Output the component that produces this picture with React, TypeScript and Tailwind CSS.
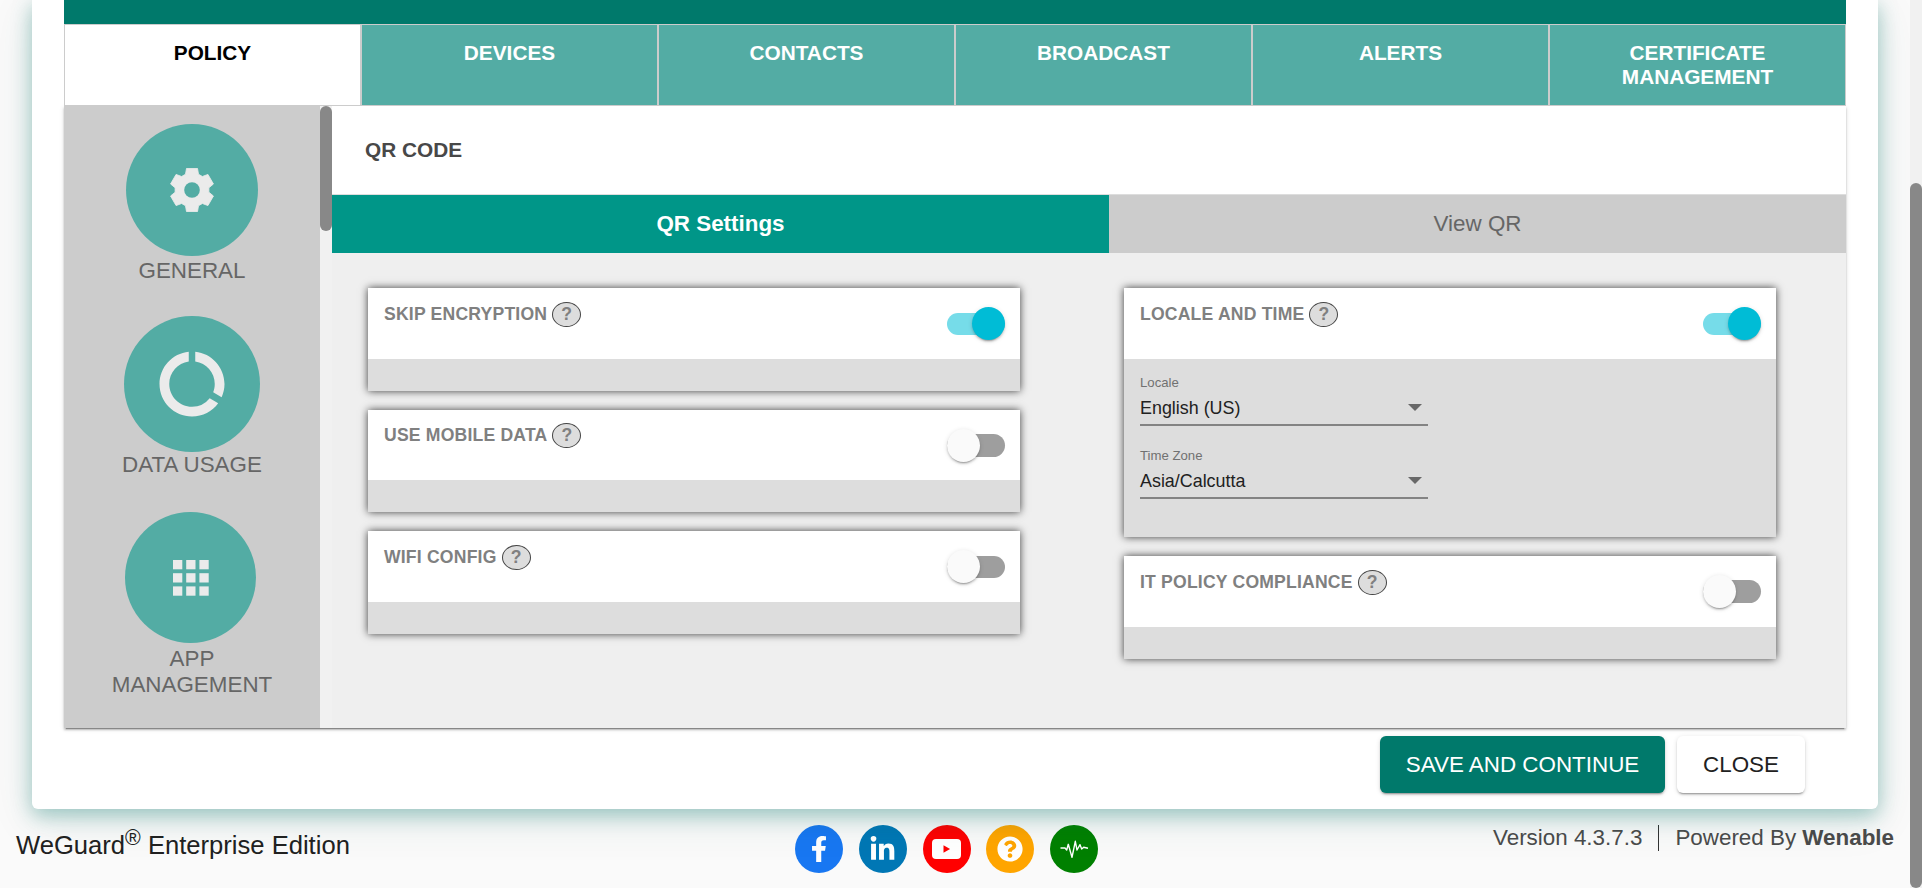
import React from "react";
import { MdDataUsage } from "react-icons/md";
import { FaFacebookF, FaLinkedinIn, FaQuestionCircle } from "react-icons/fa";

const tabs = ["POLICY", "DEVICES", "CONTACTS", "BROADCAST", "ALERTS", "CERTIFICATE MANAGEMENT"];

function Toggle({ on }: { on: boolean }) {
  return (
    <span className={`mt-[24.5px] flex h-[22.5px] w-[58px] items-center rounded-full ${on ? "justify-end bg-[#76dce9]" : "justify-start bg-[#9e9e9e]"}`}>
      <span className={`size-[33px] shrink-0 rounded-full shadow-[0_3px_1px_-2px_rgba(0,0,0,.2),0_2px_2px_0_rgba(0,0,0,.14),0_1px_5px_0_rgba(0,0,0,.12)] ${on ? "bg-[#00bcd6]" : "bg-[#fafafa]"}`} />
    </span>
  );
}

function Card({ title, on = false, children }: { title: string; on?: boolean; children?: React.ReactNode }) {
  return (
    <section className="w-[652px] shadow-[0_0_8px_0_rgba(0,0,0,.75)]">
      <div className="flex h-[70.6px] items-start justify-between bg-white pr-[15.5px] pl-4">
        <h3 className="flex items-start pt-[13.9px] text-[17.6px] leading-[25px] font-bold tracking-[0.19px] text-[#808080]">
          {title}
          <span className="ml-[5px] flex h-[25px] w-[29px] items-center justify-center rounded-[50%] border border-[#444] bg-[#ddd] tracking-normal">?</span>
        </h3>
        <Toggle on={on} />
      </div>
      <div className="min-h-8 bg-[#ddd]">{children}</div>
    </section>
  );
}

function Select({ label, value }: { label: string; value: string }) {
  return (
    <div className="h-[73px] w-[288px]">
      <div className="text-[13.2px] leading-[15px] text-[#717171]">{label}</div>
      <div className="mt-[8px] flex h-[28px] items-start justify-between border-b-2 border-[#838383] text-[17.9px] leading-5 text-[#212121]">
        <span>{value}</span>
        <svg className="mt-[6px] mr-[6px]" width="14" height="7" viewBox="0 0 14 7"><path d="M0 0h14L7 7z" fill="#686868" /></svg>
      </div>
    </div>
  );
}

const gearPoints = [0, 60, 120, 180, 240, 300]
  .flatMap((deg) => {
    const a = (deg * Math.PI) / 180;
    return [[-2.95, -7.15], [-2.5, -9.8], [2.5, -9.8], [2.95, -7.15]].map(
      ([x, y]) => `${(x * Math.cos(a) - y * Math.sin(a)).toFixed(2)},${(x * Math.sin(a) + y * Math.cos(a)).toFixed(2)}`
    );
  })
  .join(" ");

function Gear() {
  return (
    <svg width="44" height="44" viewBox="-10 -10 20 20">
      <polygon points={gearPoints} fill="#ebebeb" stroke="#ebebeb" strokeWidth="0.4" strokeLinejoin="round" />
      <circle r="3.55" fill="#53aca4" />
    </svg>
  );
}

function AppsGrid() {
  return (
    <svg width="36" height="36" viewBox="0 0 36 36" fill="#ebebeb">
      {[0, 13.2, 26.4].map((y) => [0, 13.2, 26.4].map((x) => <rect key={`${x}-${y}`} x={x} y={y} width="9.3" height="9.3" />))}
    </svg>
  );
}

function Play() {
  return (
    <svg width="29" height="20" viewBox="0 0 29 20">
      <rect width="29" height="20" rx="4" fill="#fff" />
      <path d="M11.5 6.2v7.6l6.6-3.8z" fill="#f00" />
    </svg>
  );
}

function Pulse() {
  return (
    <svg width="30" height="24" viewBox="0 0 30 24" fill="none" stroke="#fff" strokeWidth="1.4" strokeLinejoin="round">
      <path d="M1.5 11H6l1.7 2 1.6-5.7L13 20.3l3.3-16L18 13l3-5.3 1.7 4.3 2-1.7 4.3.9" />
    </svg>
  );
}

const social = [
  { bg: "bg-[#1877f2]", icon: <FaFacebookF size={26} /> },
  { bg: "bg-[#0077b5]", icon: <FaLinkedinIn size={27} /> },
  { bg: "bg-[#ff0000]", icon: <Play /> },
  { bg: "bg-[#ffa500]", icon: <FaQuestionCircle size={26} /> },
  { bg: "bg-[#008000]", icon: <Pulse /> },
];

export default function App() {
  return (
    <div className="flex h-[888px] w-full overflow-hidden bg-[#fafafa] font-['Liberation_Sans',Arial,sans-serif]">
      <div className="flex h-full min-w-0 flex-1 flex-col overflow-hidden">
        <main className="z-10 mx-8 h-[809px] shrink-0 rounded-b-[6px] bg-white px-8 shadow-[0_10px_44px_0_rgba(0,90,80,.12),0_6px_20px_0_rgba(0,121,107,.34)]">
          <div className="h-6 bg-[#00796b]" />
          <nav className="grid h-[82px] grid-cols-6">
            {tabs.map((t, i) => (
              <div key={t} className={`flex justify-center border border-[#ccc] px-12 pt-4 text-center text-[20.8px] leading-6 font-bold ${i === 0 ? "bg-white text-black" : "bg-[#53aca4] text-white"}`}>
                {t}
              </div>
            ))}
          </nav>
          <div className="flex h-[622px] shadow-[0_3px_1px_-2px_rgba(0,0,0,.3),0_2px_2px_0_rgba(0,0,0,.2),0_1px_5px_0_rgba(0,0,0,.12)]">
            <aside className="flex w-[256px] flex-col items-center bg-[#ccc] text-center text-[22.4px] leading-[26px] text-[#666]">
              <div className="mt-[18px] flex size-[132px] items-center justify-center rounded-full bg-[#53aca4]">
                <Gear />
              </div>
              <div className="mt-[2px]">GENERAL</div>
              <div className="mt-[32px] flex size-[136px] items-center justify-center rounded-full bg-[#53aca4]">
                <MdDataUsage size={78} color="#ebebeb" />
              </div>
              <div>DATA USAGE</div>
              <div className="mt-[34px] mr-[3px] flex size-[131px] items-center justify-center rounded-full bg-[#53aca4]">
                <AppsGrid />
              </div>
              <div className="mt-[3px] w-[180px]">APP MANAGEMENT</div>
            </aside>
            <div className="w-3 bg-[#f1f1f1]"><div className="h-[125px] rounded-full bg-[#888]" /></div>
            <div className="flex flex-1 flex-col bg-[#efefef]">
              <h2 className="flex h-[89px] items-center border-b border-[#ddd] bg-white pl-[33px] text-[20.8px] font-bold text-[#484848]">QR CODE</h2>
              <div className="flex h-[58px] items-center text-center text-[22.4px] leading-[58px]">
                <div className="w-[777px] bg-[#009688] font-bold text-white">QR Settings</div>
                <div className="flex-1 bg-[#ccc] text-[#666]">View QR</div>
              </div>
              <div className="flex gap-[104px] pt-[35px] pl-9">
                <div className="flex flex-col gap-[19px]">
                  <Card title="SKIP ENCRYPTION" on />
                  <Card title="USE MOBILE DATA" />
                  <Card title="WIFI CONFIG" />
                </div>
                <div className="flex flex-col gap-[19px]">
                  <Card title="LOCALE AND TIME" on>
                    <div className="h-[178.4px] px-4 pt-4">
                      <Select label="Locale" value="English (US)" />
                      <Select label="Time Zone" value="Asia/Calcutta" />
                    </div>
                  </Card>
                  <Card title="IT POLICY COMPLIANCE" />
                </div>
              </div>
            </div>
          </div>
          <div className="mt-2 mr-[41px] flex justify-end gap-3 text-[22.4px]">
            <button className="h-[57px] w-[285px] rounded-[6px] bg-[#00796b] text-white shadow-[0_3px_1px_-2px_rgba(0,0,0,.2),0_2px_2px_0_rgba(0,0,0,.14),0_1px_5px_0_rgba(0,0,0,.12)]">SAVE AND CONTINUE</button>
            <button className="h-[57px] w-[128px] rounded-[6px] bg-white text-[#212121] shadow-[0_3px_1px_-2px_rgba(0,0,0,.2),0_2px_2px_0_rgba(0,0,0,.14),0_1px_5px_0_rgba(0,0,0,.12)]">CLOSE</button>
          </div>
        </main>
        <footer className="flex items-start justify-between pr-4 pl-4">
          <div className="w-[779px] pt-[17px] text-[25.6px] leading-[38px] whitespace-nowrap text-[#212121]">
            WeGuard<sup className="-top-[9px] text-[21.3px]">®</sup> Enterprise Edition
          </div>
          <div className="flex flex-1 gap-[15.8px] pt-4">
            {social.map((s) => (
              <a key={s.bg} className={`flex size-12 items-center justify-center rounded-full text-white ${s.bg}`}>{s.icon}</a>
            ))}
          </div>
          <div className="flex items-center pt-4 text-[22.4px] leading-[26px] text-[#4b4b4b]">
            <span>Version 4.3.7.3</span>
            <span className="mx-4 h-[26px] w-px bg-[#333]" />
            <span>Powered By <b>Wenable</b></span>
          </div>
        </footer>
      </div>
      <div className="w-3 bg-[#f1f1f1] pt-[183px]"><div className="h-[705px] rounded-full bg-[#888]" /></div>
    </div>
  );
}
